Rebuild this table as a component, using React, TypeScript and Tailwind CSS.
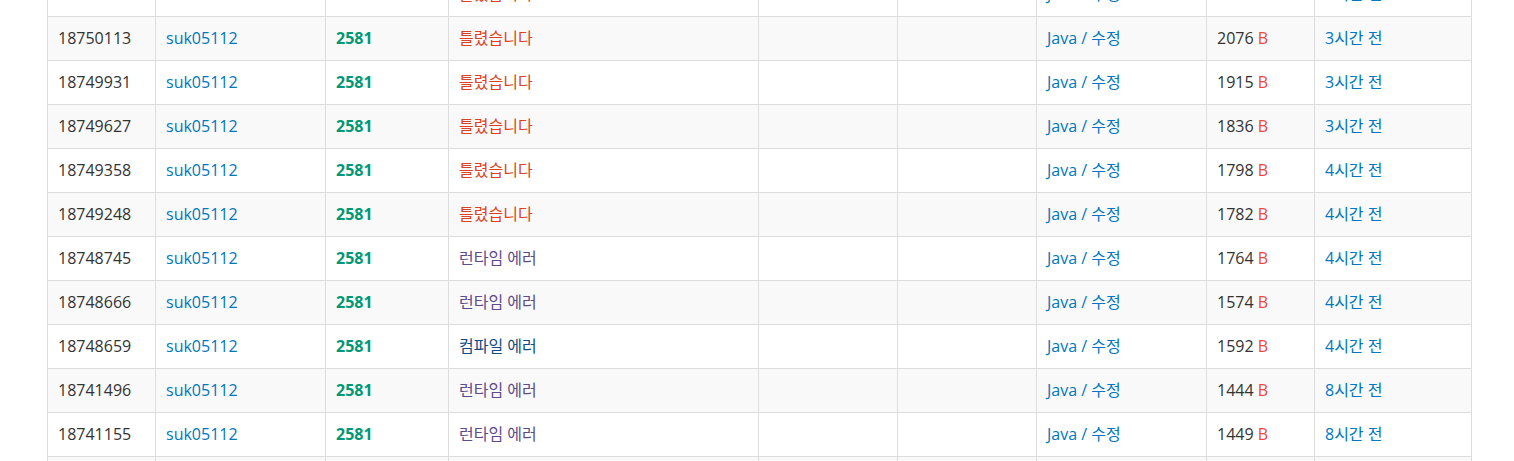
const rows = [
  { id: "18750290", result: "wrong", bytes: "2085", time: "3시간 전" },
  { id: "18750113", result: "wrong", bytes: "2076", time: "3시간 전" },
  { id: "18749931", result: "wrong", bytes: "1915", time: "3시간 전" },
  { id: "18749627", result: "wrong", bytes: "1836", time: "3시간 전" },
  { id: "18749358", result: "wrong", bytes: "1798", time: "4시간 전" },
  { id: "18749248", result: "wrong", bytes: "1782", time: "4시간 전" },
  { id: "18748745", result: "rte", bytes: "1764", time: "4시간 전" },
  { id: "18748666", result: "rte", bytes: "1574", time: "4시간 전" },
  { id: "18748659", result: "ce", bytes: "1592", time: "4시간 전" },
  { id: "18741496", result: "rte", bytes: "1444", time: "8시간 전" },
  { id: "18741155", result: "rte", bytes: "1449", time: "8시간 전" },
  { id: "18741020", result: "rte", bytes: "1412", time: "8시간 전" },
];

function Result({ kind }: { kind: string }) {
  if (kind === "wrong") return <span className="text-[#dd4124]">틀렸습니다</span>;
  if (kind === "ce") return <span className="text-[#0f4c81]">컴파일 에러</span>;
  return <span className="text-[#5f4b8b]">런타임 에러</span>;
}

const cell = "border border-[#ddd] px-[10px] pt-0 pb-[2px] align-middle";

export default function App() {
  return (
    <div
      className="h-[461px] overflow-hidden bg-white text-[16px] text-[#333]"
      style={{ fontFamily: '"Open Sans", "Noto Sans CJK KR", sans-serif' }}
    >
      <table className="-mt-[28px] ml-[47px] w-[1424px] table-fixed border-collapse">
        <colgroup>
          <col className="w-[108px]" />
          <col className="w-[170px]" />
          <col className="w-[123px]" />
          <col className="w-[310px]" />
          <col className="w-[139px]" />
          <col className="w-[139px]" />
          <col className="w-[170px]" />
          <col className="w-[108px]" />
          <col className="w-[157px]" />
        </colgroup>
        <tbody>
          {rows.map((r, i) => (
            <tr key={r.id} className={i % 2 === 1 ? "bg-[#f9f9f9]" : "bg-white"}>
              <td className={`${cell} h-[44px]`}>{r.id}</td>
              <td className={`${cell} text-[#0076c0]`}>suk05112</td>
              <td className={`${cell} font-bold text-[#009874]`}>2581</td>
              <td className={cell}>
                <Result kind={r.result} />
              </td>
              <td className={cell}></td>
              <td className={cell}></td>
              <td className={`${cell} text-[#0076c0]`}>Java / 수정</td>
              <td className={cell}>
                {r.bytes} <span className="text-[#e74c3c]">B</span>
              </td>
              <td className={`${cell} text-[#0076c0]`}>{r.time}</td>
            </tr>
          ))}
        </tbody>
      </table>
    </div>
  );
}
